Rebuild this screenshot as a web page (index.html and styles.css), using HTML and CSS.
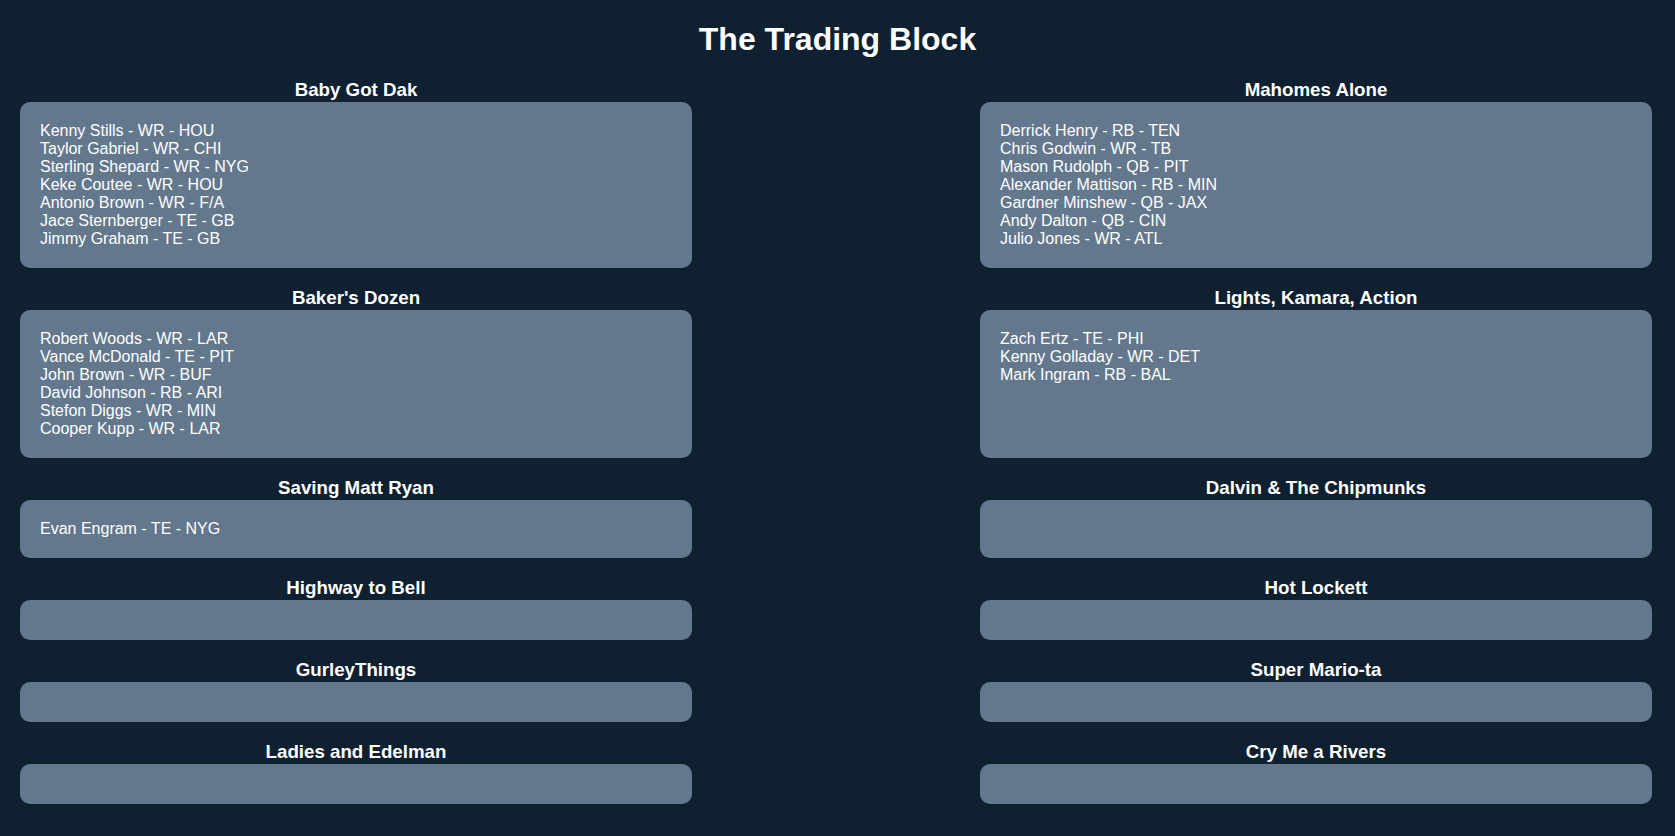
FILE: index.html
```html
<!DOCTYPE html>
<html lang="en">
<head>
<meta charset="utf-8">
<title>The Trading Block</title>
<link rel="stylesheet" href="styles.css">
</head>
<body>
<h1 class="page-title">The Trading Block</h1>
<main class="teams">
  <section class="team">
    <h3 class="team-name">Baby Got Dak</h3>
    <ul class="roster">
      <li>Kenny Stills - WR - HOU</li>
      <li>Taylor Gabriel - WR - CHI</li>
      <li>Sterling Shepard - WR - NYG</li>
      <li>Keke Coutee - WR - HOU</li>
      <li>Antonio Brown - WR - F/A</li>
      <li>Jace Sternberger - TE - GB</li>
      <li>Jimmy Graham - TE - GB</li>
    </ul>
  </section>
  <section class="team">
    <h3 class="team-name">Mahomes Alone</h3>
    <ul class="roster">
      <li>Derrick Henry - RB - TEN</li>
      <li>Chris Godwin - WR - TB</li>
      <li>Mason Rudolph - QB - PIT</li>
      <li>Alexander Mattison - RB - MIN</li>
      <li>Gardner Minshew - QB - JAX</li>
      <li>Andy Dalton - QB - CIN</li>
      <li>Julio Jones - WR - ATL</li>
    </ul>
  </section>
  <section class="team">
    <h3 class="team-name">Baker's Dozen</h3>
    <ul class="roster">
      <li>Robert Woods - WR - LAR</li>
      <li>Vance McDonald - TE - PIT</li>
      <li>John Brown - WR - BUF</li>
      <li>David Johnson - RB - ARI</li>
      <li>Stefon Diggs - WR - MIN</li>
      <li>Cooper Kupp - WR - LAR</li>
    </ul>
  </section>
  <section class="team">
    <h3 class="team-name">Lights, Kamara, Action</h3>
    <ul class="roster">
      <li>Zach Ertz - TE - PHI</li>
      <li>Kenny Golladay - WR - DET</li>
      <li>Mark Ingram - RB - BAL</li>
    </ul>
  </section>
  <section class="team">
    <h3 class="team-name">Saving Matt Ryan</h3>
    <ul class="roster">
      <li>Evan Engram - TE - NYG</li>
    </ul>
  </section>
  <section class="team">
    <h3 class="team-name">Dalvin &amp; The Chipmunks</h3>
    <ul class="roster"></ul>
  </section>
  <section class="team">
    <h3 class="team-name">Highway to Bell</h3>
    <ul class="roster"></ul>
  </section>
  <section class="team">
    <h3 class="team-name">Hot Lockett</h3>
    <ul class="roster"></ul>
  </section>
  <section class="team">
    <h3 class="team-name">GurleyThings</h3>
    <ul class="roster"></ul>
  </section>
  <section class="team">
    <h3 class="team-name">Super Mario-ta</h3>
    <ul class="roster"></ul>
  </section>
  <section class="team">
    <h3 class="team-name">Ladies and Edelman</h3>
    <ul class="roster"></ul>
  </section>
  <section class="team">
    <h3 class="team-name">Cry Me a Rivers</h3>
    <ul class="roster"></ul>
  </section>
</main>
</body>
</html>
```
FILE: styles.css
```css
html, body {
  background: #0f2031;
}

body {
  margin: 0;
  color: #ffffff;
  font-family: "Liberation Sans", Arial, Helvetica, sans-serif;
}

.page-title {
  margin: 21px 0 20px;
  font-size: 32px;
  line-height: 37px;
  font-weight: bold;
  text-align: center;
}

.teams {
  display: grid;
  grid-template-columns: 672px 672px;
  column-gap: 288px;
  row-gap: 18px;
  padding: 0 20px;
  align-items: stretch;
}

.team {
  display: flex;
  flex-direction: column;
}

.team-name {
  margin: 0;
  font-size: 18.72px;
  line-height: 24px;
  font-weight: bold;
  text-align: center;
}

.roster {
  flex: 1;
  list-style: none;
  margin: 0;
  padding: 20px;
  background: #63788c;
  border-radius: 10px;
  font-size: 16px;
  line-height: 18px;
}
```
